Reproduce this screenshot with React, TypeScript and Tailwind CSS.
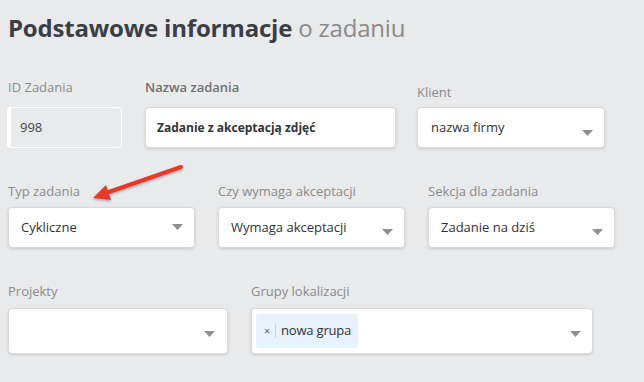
import React from "react";

const Caret = ({ className = "" }: { className?: string }) => (
  <svg width="11" height="6" viewBox="0 0 11 6" className={className}>
    <path d="M0 0 L11 0 L5.5 6 Z" fill="#8f8f8f" />
  </svg>
);

const boxCls =
  "relative flex items-center bg-white rounded-[4px] border border-[#d9d9d9] shadow-[0_1px_3px_rgba(0,0,0,0.14)]";

export default function App() {
  return (
    <div
      className="relative w-[644px] h-[382px] bg-[#e9eaec] overflow-hidden text-[#333]"
      style={{ fontFamily: '"Open Sans", "Noto Sans", sans-serif' }}
    >
      <div className="pl-[8px] pt-[12px]">
        <h1 className="text-[24px] leading-[32px] tracking-[-0.2px]">
          <span className="font-bold text-[#3b3f45]">Podstawowe informacje</span>{" "}
          <span className="font-normal text-[#8a8a8a]">o zadaniu</span>
        </h1>

        {/* Row 1 */}
        <div className="flex mt-[34px]">
          <div className="w-[115px] ml-[-1px]">
            <div className="text-[13px] leading-[18px] text-[#8a8a8a] pl-[1px]">ID Zadania</div>
            <div className="mt-[11px] h-[41px] rounded-[4px] border border-white border-l-[4px] flex items-center pl-[9px] text-[13px] text-[#444]">
              998
            </div>
          </div>
          <div className="w-[251px] ml-[23px]">
            <div className="text-[13px] leading-[18px] font-semibold text-[#707070]">Nazwa zadania</div>
            <div className={`${boxCls} mt-[11px] h-[41px] pl-[11px] text-[12px] font-bold text-[#333]`}>
              Zadanie z akceptacją zdjęć
            </div>
          </div>
          <div className="w-[188px] ml-[21px]">
            <div className="text-[13px] leading-[18px] text-[#8a8a8a] mt-[5px]">Klient</div>
            <div className={`${boxCls} mt-[6px] h-[41px] pl-[13px] text-[13px]`}>
              nazwa firmy
              <Caret className="absolute right-[11px] top-[22px]" />
            </div>
          </div>
        </div>

        {/* Row 2 */}
        <div className="flex mt-[34px]">
          <div className="w-[187px]">
            <div className="text-[13px] leading-[18px] text-[#8a8a8a]">Typ zadania</div>
            <div className={`${boxCls} mt-[7px] h-[41px] pl-[12px] text-[13px]`}>
              Cykliczne
              <Caret className="absolute right-[11px] top-[16px]" />
            </div>
          </div>
          <div className="w-[187px] ml-[23px]">
            <div className="text-[13px] leading-[18px] text-[#8a8a8a]">Czy wymaga akceptacji</div>
            <div className={`${boxCls} mt-[7px] h-[41px] pl-[12px] text-[13px]`}>
              Wymaga akceptacji
              <Caret className="absolute right-[11px] top-[21px]" />
            </div>
          </div>
          <div className="w-[187px] ml-[23px]">
            <div className="text-[13px] leading-[18px] text-[#8a8a8a]">Sekcja dla zadania</div>
            <div className={`${boxCls} mt-[7px] h-[41px] pl-[12px] text-[13px]`}>
              Zadanie na dziś
              <Caret className="absolute right-[11px] top-[21px]" />
            </div>
          </div>
        </div>

        {/* Row 3 */}
        <div className="flex mt-[34px]">
          <div className="w-[220px]">
            <div className="text-[13px] leading-[18px] text-[#8a8a8a]">Projekty</div>
            <div className={`${boxCls} mt-[8px] h-[46px]`}>
              <Caret className="absolute right-[12px] top-[22px]" />
            </div>
          </div>
          <div className="w-[342px] ml-[23px]">
            <div className="text-[13px] leading-[18px] text-[#8a8a8a]">Grupy lokalizacji</div>
            <div className={`${boxCls} mt-[8px] h-[46px] pl-[4px]`}>
              <div className="flex items-center h-[34px] pl-[8px] pr-[7px] rounded-[3px] bg-[#e8f2fd] text-[13px] tracking-[-0.2px]">
                <span className="text-[11px] text-[#666]">×</span>
                <span className="mx-[5px] w-px h-[14px] bg-[#b9d7f5]" />
                <span className="text-[#333]">nowa grupa</span>
              </div>
              <Caret className="absolute right-[11px] top-[22px]" />
            </div>
          </div>
        </div>
      </div>

      {/* Annotation arrow */}
      <svg
        className="absolute left-0 top-0 pointer-events-none"
        width="644"
        height="382"
        viewBox="0 0 644 382"
      >
        <defs>
          <filter id="sh" x="-20%" y="-20%" width="140%" height="140%">
            <feDropShadow dx="0" dy="1.5" stdDeviation="1.2" floodColor="#000" floodOpacity="0.3" />
          </filter>
        </defs>
        <g filter="url(#sh)">
          <line x1="181" y1="167" x2="106" y2="193" stroke="#e8372a" strokeWidth="4" strokeLinecap="round" />
          <path d="M93 198 L106 185 L111 200 Z" fill="#e8372a" />
        </g>
      </svg>
    </div>
  );
}
